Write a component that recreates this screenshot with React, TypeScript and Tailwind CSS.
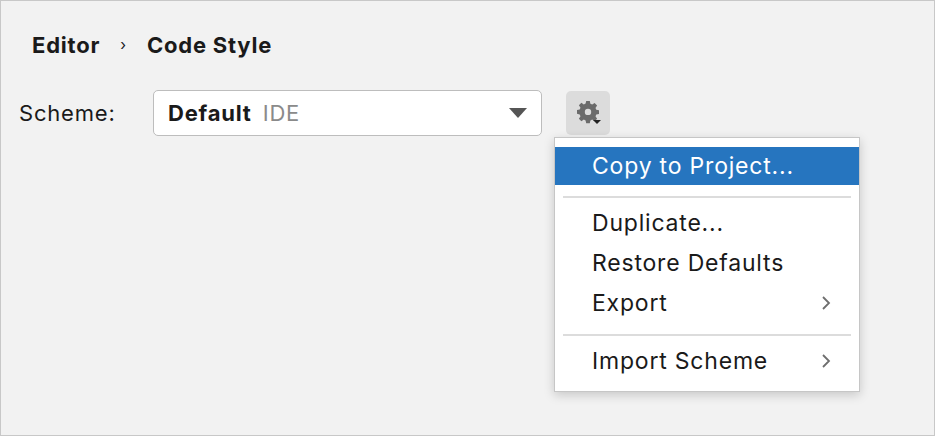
import React from "react";

const Chevron = () => (
  <svg width="10" height="16" viewBox="0 0 10 16" className="text-[#6e6e6e]">
    <path d="M2 2l6 6-6 6" fill="none" stroke="currentColor" strokeWidth="1.8" />
  </svg>
);

const Gear = () => (
  <svg width="34" height="34" viewBox="0 0 34 34">
    <g transform="translate(6 5)" fill="#6b6b6b">
      <path d="M9.2 0h3.6l.6 2.8 1.8.8 2.4-1.6 2.5 2.5-1.6 2.4.8 1.8 2.7.6v3.6l-2.7.6-.8 1.8 1.6 2.4-2.5 2.5-2.4-1.6-1.8.8-.6 2.8H9.2l-.6-2.8-1.8-.8-2.4 1.6-2.5-2.5 1.6-2.4-.8-1.8L0 12.7V9.1l2.7-.6.8-1.8L1.9 4.3 4.4 1.8l2.4 1.6 1.8-.8z" />
      <circle cx="11" cy="10.9" r="3.2" fill="#dcdcdc" />
    </g>
    <path d="M22 24h8l-4 4z" fill="#222" />
  </svg>
);

const Sep = () => <div className="mx-2 mt-[11px] mb-[5px] h-[2px] bg-[#dcdcdc]" />;

const Item = ({ label, sub }: { label: string; sub?: boolean }) => (
  <div className="flex h-10 items-center justify-between pl-[37px] pr-[28px]">
    <span>{label}</span>
    {sub && <Chevron />}
  </div>
);

export default function App() {
  return (
    <div
      className="relative h-[436px] w-[935px] border border-[#c8c8c8] bg-[#f2f2f2] text-[#1a1a1a] tracking-[0.05em]"
      style={{ fontFamily: "Inter, 'Noto Sans', sans-serif" }}
    >
      <div className="flex items-center pl-[31px] pt-[28px] text-[22px] font-bold">
        <span>Editor</span>
        <span className="mx-[20px] text-[15px] font-normal">›</span>
        <span>Code Style</span>
      </div>
      <div className="mt-[28px] flex items-center pl-[18px]">
        <span className="w-[134px] text-[22px]">Scheme:</span>
        <div className="flex h-[46px] w-[389px] items-center justify-between rounded-[5px] border border-[#bdbdbd] bg-white pl-[14px] pr-[14px] text-[22px]">
          <span>
            <b>Default</b>
            <span className="ml-[11px] text-[#8a8a8a]">IDE</span>
          </span>
          <svg width="18" height="10" viewBox="0 0 18 10">
            <path d="M0 0h18L9 10z" fill="#555" />
          </svg>
        </div>
        <div className="ml-[24px] flex h-[44px] w-[44px] items-center justify-center rounded-[5px] bg-[#dcdcdc]">
          <Gear />
        </div>
      </div>
      <div className="absolute left-[553px] top-[136px] w-[306px] border border-[#c6c6c6] bg-white pt-[9px] pb-[10px] text-[23px] shadow-[0_3px_10px_rgba(0,0,0,0.18)]">
        <div className="flex h-[38px] items-center bg-[#2675bf] pl-[37px] text-white">Copy to Project...</div>
        <Sep />
        <Item label="Duplicate..." />
        <Item label="Restore Defaults" />
        <Item label="Export" sub />
        <Sep />
        <Item label="Import Scheme" sub />
      </div>
    </div>
  );
}
